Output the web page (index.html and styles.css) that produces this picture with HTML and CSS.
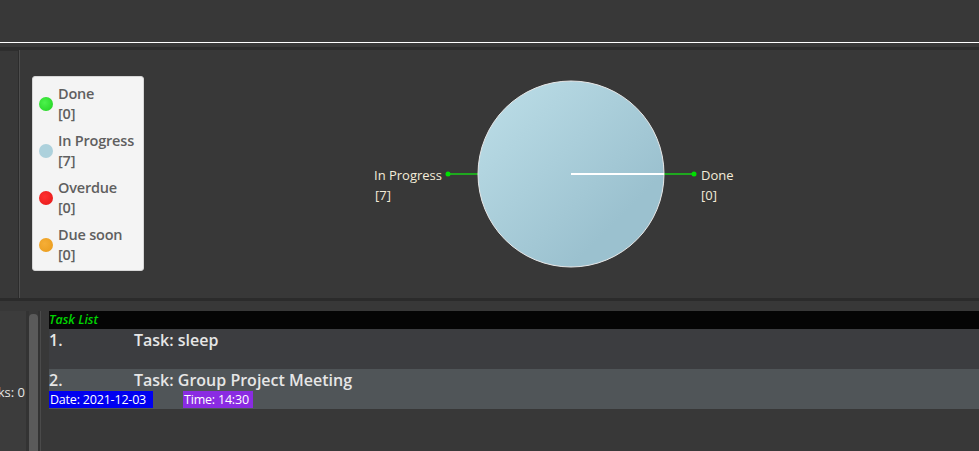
FILE: index.html
```html
<!DOCTYPE html>
<html>
<head>
<meta charset="utf-8">
<link rel="stylesheet" href="styles.css">
</head>
<body>
<div class="app">
  <div class="topbar"></div>
  <div class="rule"></div>
  <div class="gap"></div>
  <div class="sep"></div>
  <div class="middle">
    <div class="side-stub"></div>
    <div class="divider"></div>
    <div class="chart-area">
      <div class="legend">
        <div class="legend-item"><span class="dot dot-done"></span><div class="legend-text">Done<br>[0]</div></div>
        <div class="legend-item"><span class="dot dot-progress"></span><div class="legend-text">In Progress<br>[7]</div></div>
        <div class="legend-item"><span class="dot dot-overdue"></span><div class="legend-text">Overdue<br>[0]</div></div>
        <div class="legend-item"><span class="dot dot-soon"></span><div class="legend-text">Due soon<br>[0]</div></div>
      </div>
      <svg class="pie" width="835" height="247" viewBox="0 0 835 247">
        <defs>
          <linearGradient id="pg" x1="0" y1="0" x2="1" y2="1">
            <stop offset="0.1" stop-color="#b9dbe5"/>
            <stop offset="0.75" stop-color="#9bc1cf"/>
          </linearGradient>
        </defs>
        <line x1="304" y1="124" x2="336" y2="124" stroke="#1fa81f" stroke-width="2"/>
        <circle cx="304" cy="124" r="2.5" fill="#00e000"/>
        <line x1="518" y1="124" x2="550" y2="124" stroke="#1fa81f" stroke-width="2"/>
        <circle cx="550" cy="124" r="2.5" fill="#00e000"/>
        <circle cx="427" cy="124" r="93" fill="url(#pg)" stroke="#e8e8e8" stroke-width="1"/>
        <line x1="427" y1="124" x2="520" y2="124" stroke="#ffffff" stroke-width="2"/>
        <text class="plabel" x="298" y="130" text-anchor="end">In Progress</text>
        <text class="plabel" x="231" y="150">[7]</text>
        <text class="plabel" x="557" y="130">Done</text>
        <text class="plabel" x="557" y="150">[0]</text>
      </svg>
    </div>
  </div>
  <div class="sep2"></div>
  <div class="lower">
    <div class="stats"><span class="stats-text">Total tasks: 0</span></div>
    <div class="scroll-gap"></div>
    <div class="scrollbar"></div>
    <div class="scroll-gap2"></div>
    <div class="vline"></div>
    <div class="list-gap"></div>
    <div class="tasklist">
      <div class="tl-header">Task List</div>
      <div class="task task-odd">
        <div class="task-title"><span class="task-num">1.</span><span>Task: sleep</span></div>
      </div>
      <div class="task task-even">
        <div class="task-title"><span class="task-num">2.</span><span>Task: Group Project Meeting</span></div>
        <div class="task-meta"><span class="tag tag-date">Date: 2021-12-03</span><span class="tag tag-time">Time: 14:30</span></div>
      </div>
    </div>
  </div>
</div>
</body>
</html>
```

FILE: styles.css
```css
* { box-sizing: border-box; }
html, body {
  margin: 0;
  padding: 0;
  background: #383838;
  font-family: "Open Sans", "Liberation Sans", sans-serif;
  overflow: hidden;
}
.app {
  width: 979px;
  height: 451px;
  display: flex;
  flex-direction: column;
}
.topbar { height: 42px; background: #383838; }
.rule { height: 1px; background: #ffffff; }
.gap { height: 4px; }
.sep { height: 3px; background: #2b2b2b; }
.middle {
  height: 248px;
  display: flex;
}
.side-stub {
  width: 19px;
  border-top: 1px solid #2e2e2e;
  border-right: 1px solid #2c2c2c;
  background: #383838;
}
.divider { width: 1px; background: #4e4e4e; }
.chart-area {
  flex: 1;
  display: flex;
  align-items: flex-start;
  padding-left: 12px;
}
.legend {
  margin-top: 26px;
  width: 112px;
  height: 195px;
  background: #f4f4f4;
  border: 1px solid #d6d6d6;
  border-radius: 3px;
  padding: 7px 0 0 6px;
  display: flex;
  flex-direction: column;
  gap: 7px;
}
.legend-item {
  display: flex;
  align-items: center;
  gap: 5px;
}
.legend-text {
  font-size: 14.5px;
  line-height: 20px;
  color: #5f5f5f;
  font-weight: 600;
  letter-spacing: -0.2px;
}
.dot {
  width: 14px;
  height: 14px;
  border-radius: 50%;
  flex: none;
}
.dot-done { background: radial-gradient(circle at 40% 40%, #4cf24c, #1fd01f); }
.dot-progress { background: #add1dc; }
.dot-overdue { background: radial-gradient(circle at 40% 40%, #ff3030, #e41818); }
.dot-soon { background: radial-gradient(circle at 40% 40%, #f6ae36, #e89a1a); }
.pie { display: block; flex: none; }
.plabel {
  font-family: "Open Sans", "Liberation Sans", sans-serif;
  font-size: 13px;
  fill: #f3ecd9;
}
.sep2 { height: 3px; background: #2b2b2b; }
.lower {
  flex: 1;
  display: flex;
  padding-top: 10px;
}
.stats {
  width: 26px;
  background: #3c3c3c;
  overflow: hidden;
  display: flex;
  justify-content: flex-end;
  padding-top: 72px;
}
.stats-text {
  white-space: nowrap;
  font-size: 13px;
  color: #e6e6e6;
  padding-right: 1px;
}
.scroll-gap { width: 3px; background: #333333; }
.scrollbar {
  width: 9px;
  margin-top: 3px;
  background: #5a5a5a;
  border-radius: 4px 4px 0 0;
}
.scroll-gap2 { width: 2px; background: #333333; }
.vline { width: 1px; background: #4a4a4a; }
.list-gap { width: 8px; }
.tasklist {
  flex: 1;
  display: flex;
  flex-direction: column;
}
.tl-header {
  height: 18px;
  background: #050505;
  color: #00d400;
  font-style: italic;
  font-weight: 600;
  font-size: 12.5px;
  line-height: 18px;
}
.task {
  height: 40px;
}
.task-odd { background: #3c3d40; }
.task-even { background: #505558; }
.task-title {
  display: flex;
  font-size: 16px;
  font-weight: 600;
  color: #e6e6e6;
  line-height: 22px;
}
.task-num { width: 85px; }
.task-meta {
  display: flex;
  gap: 30px;
}
.tag {
  font-size: 12.5px;
  letter-spacing: -0.2px;
  line-height: 17px;
  color: #ffffff;
  height: 17px;
  white-space: nowrap;
  padding: 0 1px;
}
.tag-date { background: #0000f0; width: 104px; }
.tag-time { background: #8a2be2; width: 70px; }
```
